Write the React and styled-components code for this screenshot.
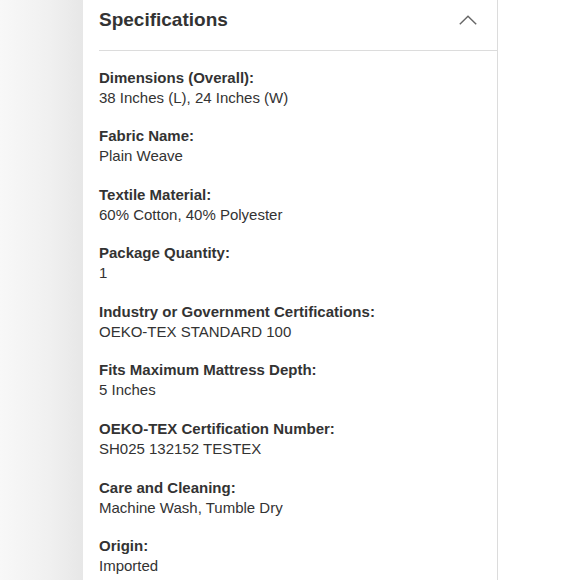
import React from "react";
import styled, { createGlobalStyle } from "styled-components";

const Global = createGlobalStyle`
  html, body { margin: 0; padding: 0; background: #fff; }
  body { overflow: hidden; font-family: "Liberation Sans", Arial, Helvetica, sans-serif; }
`;

const Page = styled.div`
  display: flex;
  width: 580px;
  height: 580px;
  overflow: hidden;
`;

const Gutter = styled.div`
  width: 83px;
  flex: none;
  background: linear-gradient(to right, #f8f8f8 0%, #f0f0f0 60%, #e7e7e7 100%);
`;

const Panel = styled.section`
  flex: none;
  width: 415px;
  box-sizing: border-box;
  background: #fff;
  border-right: 1px solid #dcdcdc;
  padding-left: 16px;
`;

const Header = styled.div`
  height: 51px;
  box-sizing: border-box;
  display: flex;
  justify-content: space-between;
  align-items: flex-start;
  padding: 8px 20px 0 0;
  border-bottom: 1px solid #dcdcdc;
`;

const Title = styled.h2`
  margin: 0;
  font-size: 19px;
  line-height: 24px;
  font-weight: 700;
  color: #333;
`;

const Toggle = styled.button`
  border: 0;
  background: none;
  padding: 0;
  margin-top: 5px;
  width: 18px;
  height: 10px;
  display: block;
  cursor: pointer;
`;

const List = styled.dl`
  margin: 0;
  padding: 16.5px 0 0;
  display: flex;
  flex-direction: column;
  gap: 18.6px;
`;

const Item = styled.div`
  display: flex;
  flex-direction: column;
`;

const Label = styled.dt`
  font-size: 15px;
  line-height: 20px;
  font-weight: 700;
  color: #333;
`;

const Value = styled.dd`
  margin: 0;
  font-size: 15px;
  line-height: 20px;
  color: #333;
`;

const Rest = styled.div`
  flex: 1;
  background: #fff;
`;

const specs = [
  ["Dimensions (Overall):", "38 Inches (L), 24 Inches (W)"],
  ["Fabric Name:", "Plain Weave"],
  ["Textile Material:", "60% Cotton, 40% Polyester"],
  ["Package Quantity:", "1"],
  ["Industry or Government Certifications:", "OEKO-TEX STANDARD 100"],
  ["Fits Maximum Mattress Depth:", "5 Inches"],
  ["OEKO-TEX Certification Number:", "SH025 132152 TESTEX"],
  ["Care and Cleaning:", "Machine Wash, Tumble Dry"],
  ["Origin:", "Imported"],
];

export default function App() {
  return (
    <>
      <Global />
      <Page>
        <Gutter />
        <Panel>
          <Header>
            <Title>Specifications</Title>
            <Toggle aria-label="Collapse">
              <svg width="18" height="10" viewBox="0 0 18 10">
                <polyline
                  points="0.8,9.3 9,1.2 17.2,9.3"
                  fill="none"
                  stroke="#666"
                  strokeWidth="1.4"
                />
              </svg>
            </Toggle>
          </Header>
          <List>
            {specs.map(([k, v]) => (
              <Item key={k}>
                <Label>{k}</Label>
                <Value>{v}</Value>
              </Item>
            ))}
          </List>
        </Panel>
        <Rest />
      </Page>
    </>
  );
}
